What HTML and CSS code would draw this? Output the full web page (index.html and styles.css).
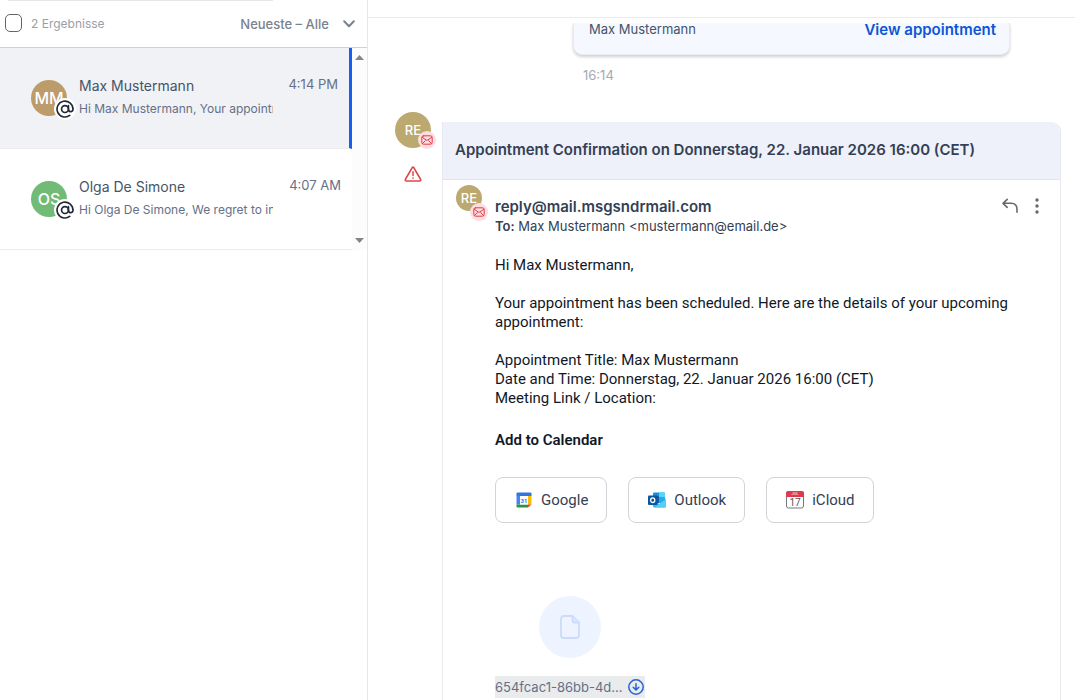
FILE: index.html
```
<!DOCTYPE html>
<html lang="de">
<head>
    <meta charset="UTF-8">
    <meta name="viewport" content="width=device-width, initial-scale=1.0">
    <title>Conversations</title>
    <link rel="stylesheet" href="styles.css">
</head>
<body>
    <div class="app">
        <aside class="sidebar">
            <div class="search-edge"></div>
            <div class="toolbar">
                <label class="select-all">
                    <input type="checkbox">
                    <span>2 Ergebnisse</span>
                </label>
                <button class="sort" type="button">
                    Neueste – Alle
                    <svg width="12" height="8" viewBox="0 0 12 8" fill="none" stroke="currentColor" stroke-width="2" stroke-linecap="round" stroke-linejoin="round"><path d="M1.2 1.2 6 6.2l4.800-5"/></svg>
                </button>
            </div>
            <div class="list">
                <div class="rows">
                    <a class="row active" href="#max">
                        <span class="avatar tan">MM
                            <span class="at"><svg width="18" height="18" viewBox="0 0 24 24" fill="none" stroke="currentColor" stroke-width="2.200" stroke-linecap="round"><circle cx="12" cy="12" r="4.600"/><path d="M16.600 7.500v5.500a3 3 0 0 0 6-1 10.600 10.600 0 1 0-4.300 8.600"/></svg></span>
                        </span>
                        <span class="summary">
                            <span class="name">Max Mustermann</span>
                            <span class="preview">Hi Max Mustermann, Your appointment</span>
                        </span>
                        <span class="time">4:14 PM</span>
                    </a>
                    <a class="row" href="#olga">
                        <span class="avatar green">OS
                            <span class="at"><svg width="18" height="18" viewBox="0 0 24 24" fill="none" stroke="currentColor" stroke-width="2.200" stroke-linecap="round"><circle cx="12" cy="12" r="4.600"/><path d="M16.600 7.500v5.500a3 3 0 0 0 6-1 10.600 10.600 0 1 0-4.300 8.600"/></svg></span>
                        </span>
                        <span class="summary">
                            <span class="name">Olga De Simone</span>
                            <span class="preview">Hi Olga De Simone, We regret to inform</span>
                        </span>
                        <span class="time">4:07 AM</span>
                    </a>
                </div>
                <div class="scrollbar">
                    <svg width="9" height="5" viewBox="0 0 9 5"><path d="M0 5 4.500 0 9 5z" fill="#858585"/></svg>
                    <svg width="9" height="5" viewBox="0 0 9 5"><path d="M0 0 4.500 5 9 0z" fill="#858585"/></svg>
                </div>
            </div>
        </aside>

        <main class="conversation">
            <header class="topbar"></header>
            <div class="messages">
                <div class="appointment">
                    <span>Max Mustermann</span>
                    <a href="#appointment">View appointment</a>
                </div>
                <div class="sent-at">16:14</div>

                <section class="message">
                    <div class="sender">
                        <span class="avatar olive">RE
                            <span class="mail"><svg width="12" height="10" viewBox="0 0 12 10" fill="none" stroke="currentColor" stroke-width="1" stroke-linecap="round" stroke-linejoin="round"><rect x=".8" y=".8" width="10.400" height="8.400" rx="1.800"/><path d="m1.200 2.200 4 2.800q.8.500 1.600 0l4-2.800M1.500 8.500l2.800-2.800M10.500 8.500 7.700 5.700"/></svg></span>
                        </span>
                        <svg class="warning" width="18" height="16" viewBox="0 0 18 16" fill="none" stroke="currentColor" stroke-width="1.500" stroke-linecap="round" stroke-linejoin="round"><path d="M8.300 1.500q.7-1 1.400 0l7 12q.5 1.300-.8 1.400H2.100q-1.300-.1-.8-1.400zM9 5.800v3.600M9 12.100v.1"/></svg>
                    </div>
                    <article class="email">
                        <h2>Appointment Confirmation on Donnerstag, 22. Januar 2026 16:00 (CET)</h2>
                        <div class="email-head">
                            <span class="avatar small olive">RE
                                <span class="mail"><svg width="12" height="10" viewBox="0 0 12 10" fill="none" stroke="currentColor" stroke-width="1" stroke-linecap="round" stroke-linejoin="round"><rect x=".8" y=".8" width="10.400" height="8.400" rx="1.800"/><path d="m1.200 2.200 4 2.800q.8.500 1.600 0l4-2.800M1.500 8.500l2.800-2.800M10.500 8.500 7.700 5.700"/></svg></span>
                            </span>
                            <div class="addresses">
                                <div class="from">reply@mail.msgsndrmail.com</div>
                                <div class="to"><b>To:</b> Max Mustermann &lt;mustermann@email.de&gt;</div>
                            </div>
                            <button class="icon-button" type="button" aria-label="Reply">
                                <svg width="16" height="16" viewBox="0 0 16 16" fill="none" stroke="currentColor" stroke-width="1.600" stroke-linecap="round" stroke-linejoin="round"><path d="M5.200 1.300 1 5.300l4.200 4M1 5.300h8q6 0 6 6v3"/></svg>
                            </button>
                            <button class="icon-button" type="button" aria-label="More">
                                <svg width="4" height="16" viewBox="0 0 4 16" fill="currentColor"><circle cx="2" cy="2" r="1.700"/><circle cx="2" cy="8" r="1.700"/><circle cx="2" cy="14" r="1.700"/></svg>
                            </button>
                        </div>
                        <div class="email-body">
                            <p>Hi Max Mustermann,</p>
                            <p>Your appointment has been scheduled. Here are the details of your upcoming appointment:</p>
                            <p>Appointment Title: Max Mustermann<br>
                            Date and Time: Donnerstag, 22. Januar 2026 16:00 (CET)<br>
                            Meeting Link / Location:</p>
                            <h3>Add to Calendar</h3>
                            <div class="calendars">
                                <a href="#google">
                                    <svg width="20" height="20" viewBox="0 0 20 20"><path d="M3.500 2.500h13a1 1 0 0 1 1 1V6h-15V3.500a1 1 0 0 1 1-1z" fill="#3474dc"/><path d="M2.500 6H6v8.500H2.500z" fill="#4285f4"/><path d="M14 6h3.500v8.500H14z" fill="#fbbc04"/><path d="M2.500 14.500H14v3H3.500a1 1 0 0 1-1-1z" fill="#279447"/><path d="M14 14.500h3.500l-3.500 3z" fill="#ea4335"/><path d="M6 6h8v8.500H6z" fill="#fff"/><text x="10" y="12.500" text-anchor="middle" font-size="6" font-weight="700" fill="#3474dc">31</text></svg>
                                    Google
                                </a>
                                <a href="#outlook">
                                    <svg width="20" height="20" viewBox="0 0 20 20"><path d="M6 3.500a1 1 0 0 1 1-1h10a1 1 0 0 1 1 1V13H6z" fill="#1490df"/><path d="M12 2.500h5a1 1 0 0 1 1 1V7h-6z" fill="#50d9ff"/><path d="M6 6h6v7H6z" fill="#0f5ba7"/><path d="M12 7h6v6h-6z" fill="#28a8ea"/><path d="M6 10.500 12.500 14 19 9v7a1.500 1.500 0 0 1-1.500 1.500h-10A1.500 1.500 0 0 1 6 16z" fill="#35b8f1"/><path d="m19 9-11.500 8.500h10A1.500 1.500 0 0 0 19 16z" fill="#55cef5"/><rect x="1" y="5.500" width="9.500" height="9.500" rx="1" fill="#07569e"/><ellipse cx="5.700" cy="10.200" rx="2.100" ry="2.300" fill="none" stroke="#fff" stroke-width="1.300"/></svg>
                                    Outlook
                                </a>
                                <a href="#icloud">
                                    <svg width="20" height="20" viewBox="0 0 20 20"><rect x="1.500" y="1.500" width="17" height="16.500" rx="2" fill="#fff" stroke="#77777b"/><path d="M1 7V3.200A2.200 2.200 0 0 1 3.200 1h13.600A2.200 2.200 0 0 1 19 3.200V7z" fill="#df3a4c"/><text x="10" y="5.300" text-anchor="middle" font-size="4" fill="#fff">JUL</text><text x="10" y="16" text-anchor="middle" font-size="10" fill="#55555b">17</text></svg>
                                    iCloud
                                </a>
                            </div>
                        </div>
                        <div class="attachment">
                            <div class="file-icon">
                                <svg width="20" height="24" viewBox="0 0 20 24" fill="none" stroke="currentColor" stroke-width="1.800" stroke-linejoin="round"><path d="M12.500 1H4a3 3 0 0 0-3 3v16a3 3 0 0 0 3 3h12a3 3 0 0 0 3-3V7.500z"/><path d="M12.500 1v4.500a2 2 0 0 0 2 2H19" fill="#dbe7ff"/></svg>
                            </div>
                            <a class="file" href="#file">654fcac1-86bb-4d...
                                <svg width="16" height="16" viewBox="0 0 16 16" fill="none" stroke="#2563d4" stroke-width="1.500" stroke-linecap="round" stroke-linejoin="round"><circle cx="8" cy="8" r="7.200"/><path d="M8 4.800v6M5.200 8.200 8 11l2.800-2.800"/></svg>
                            </a>
                        </div>
                    </article>
                </section>
            </div>
        </main>
    </div>
</body>
</html>
```

FILE: styles.css
```
* {
    box-sizing: border-box;
}
body {
    margin: 0;
    font-family: Inter, sans-serif;
    color: #344054;
    background: #fff;
}
a {
    color: inherit;
    text-decoration: none;
}
button {
    padding: 0;
    border: none;
    background: none;
    font: inherit;
    color: inherit;
    cursor: pointer;
}
svg {
    display: block;
    flex-shrink: 0;
}
.app {
    display: flex;
    height: 100vh;
    overflow: hidden;
}

/* sidebar */
.sidebar {
    flex: 0 0 368px;
    border-right: 1px solid #e6e7e9;
}
.search-edge {
    height: 1px;
    margin: 0 94px 0 8px;
    background: #e6e7ea;
}
.toolbar {
    display: flex;
    justify-content: space-between;
    align-items: center;
    height: 47px;
    padding: 0 12px 2px 5px;
    border-bottom: 1px solid #d0d1d4;
}
.select-all {
    display: flex;
    align-items: center;
    gap: 9px;
    font-size: 12px;
    color: #98a0a8;
}
.select-all input {
    appearance: none;
    width: 17px;
    height: 18px;
    margin: 0;
    border: 1px solid #62666b;
    border-radius: 5px;
    background: #fff;
}
.sort {
    display: flex;
    align-items: center;
    gap: 14px;
    padding-top: 2px;
    font-size: 13px;
    font-weight: 500;
    color: #7a838d;
}
.list {
    display: flex;
}
.rows {
    flex: 1;
    min-width: 0;
}
.row {
    display: flex;
    align-items: flex-start;
    height: 101px;
    padding: 27px 11px 0 31px;
    border-bottom: 1px solid #ededf0;
}
.row.active {
    border-right: 3px solid #155eef;
    background: #f0f2f6;
}
.avatar {
    position: relative;
    display: flex;
    flex-shrink: 0;
    justify-content: center;
    align-items: center;
    width: 36px;
    height: 36px;
    border-radius: 50%;
    font-size: 16px;
    font-weight: 500;
    color: #fff;
}
.row .avatar {
    margin-top: 5px;
}
.tan {
    background: #bd9c6c;
}
.green {
    background: #72bb76;
}
.olive {
    background: #bba970;
    font-size: 13px;
}
.at {
    position: absolute;
    right: -9px;
    bottom: -4px;
    padding: 2px;
    border-radius: 50%;
    color: #202838;
    background: #fff;
}
.summary {
    flex: 1;
    min-width: 0;
    margin-left: 12px;
}
.name,
.preview {
    display: block;
    line-height: 22px;
    white-space: nowrap;
    overflow: hidden;
}
.name {
    font-size: 14px;
    color: #475467;
}
.preview {
    width: 194px;
    padding-top: 1px;
    font-size: 12px;
    color: #667085;
}
.time {
    margin-left: -60px;
    font-size: 13px;
    line-height: 18px;
    color: #667085;
}
.scrollbar {
    display: flex;
    flex-direction: column;
    justify-content: space-between;
    align-items: center;
    width: 15px;
    padding: 7px 0;
    background: #fcfcfc;
}

/* conversation */
.conversation {
    flex: 1;
    min-width: 0;
    display: flex;
    flex-direction: column;
}
.topbar {
    flex: 0 0 18px;
    margin-bottom: 5px;
    border-bottom: 1px solid #e8eaed;
}
.messages {
    flex: 1;
    min-height: 0;
    display: flex;
    flex-direction: column;
    overflow: hidden;
}
.appointment {
    display: flex;
    flex-shrink: 0;
    justify-content: space-between;
    height: 32px;
    margin: 0 65px 0 205px;
    padding: 0 13px 0 15px;
    border: 1px solid #e7eaf2;
    border-top: none;
    border-radius: 0 0 9px 9px;
    background: #f5f8ff;
    box-shadow: 0 2px 3px rgba(16, 24, 40, 0.2);
    font-size: 13px;
    line-height: 12px;
    color: #475467;
}
.appointment a {
    font-size: 15px;
    font-weight: 600;
    line-height: 14px;
    color: #0c56d6;
}
.sent-at {
    margin: 11px 0 0 215px;
    font-size: 13px;
    line-height: 18px;
    color: #a4a9b0;
}
.message {
    display: flex;
    flex: 1 0 auto;
    gap: 11px;
    margin-top: 28px;
    padding: 0 14px 0 27px;
}
.sender {
    display: flex;
    flex-direction: column;
    align-items: center;
    gap: 18px;
}
.mail {
    position: absolute;
    right: -5px;
    bottom: -1px;
    display: flex;
    justify-content: center;
    align-items: center;
    width: 18px;
    height: 18px;
    border-radius: 50%;
    color: #dc3f4a;
    background: #fedcdf;
}
.warning {
    color: #df4545;
}
.email {
    flex: 1;
    min-width: 0;
    margin-top: 10px;
    padding-bottom: 24px;
    border: 1px solid #e8eaf0;
    border-top: none;
    border-radius: 0 9px 0 0;
}
.email h2 {
    margin: 0;
    padding: 16px 12px 17px;
    border-bottom: 1px solid #e1e5ed;
    border-radius: 0 9px 0 0;
    background: #eef1fa;
    font-size: 15px;
    font-weight: 600;
    line-height: 24px;
}
.email-head {
    display: flex;
    align-items: flex-start;
    padding: 5px 21px 0 13px;
}
.avatar.small {
    width: 26px;
    height: 26px;
}
.small .mail {
    right: -6px;
    bottom: -10px;
}
.addresses {
    flex: 1;
    margin: 12px 0 0 13px;
}
.from {
    font-size: 15px;
    font-weight: 600;
    line-height: 20px;
}
.to {
    font-size: 13px;
    line-height: 19px;
}
.to b {
    font-weight: 600;
}
.icon-button {
    margin: 13px 0 0 17px;
    color: #66696e;
}
.email-body {
    padding: 20px 30px 0 52px;
    font-family: Roboto, sans-serif;
    font-size: 15px;
    line-height: 19px;
    color: #101828;
}
.email-body p {
    margin: 0 0 19px;
}
.email-body h3 {
    margin: 23px 0 27px;
    font-size: 15px;
    font-weight: 600;
}
.calendars {
    display: flex;
    gap: 21px;
}
.calendars a {
    display: flex;
    align-items: center;
    gap: 7px;
    height: 46px;
    padding: 0 18px;
    border: 1px solid #d0d3d8;
    border-radius: 8px;
    color: #344054;
}
.attachment {
    width: 150px;
    margin: 73px 0 0 52px;
}
.file-icon {
    display: flex;
    justify-content: center;
    align-items: center;
    width: 62px;
    height: 62px;
    margin: 0 auto 18px;
    border-radius: 50%;
    color: #cbdcfa;
    background: #edf3ff;
}
.file {
    display: flex;
    justify-content: space-between;
    align-items: center;
    height: 22px;
    padding-right: 1px;
    background: #e9ebed;
    font-size: 13px;
    color: #667085;
}
```
